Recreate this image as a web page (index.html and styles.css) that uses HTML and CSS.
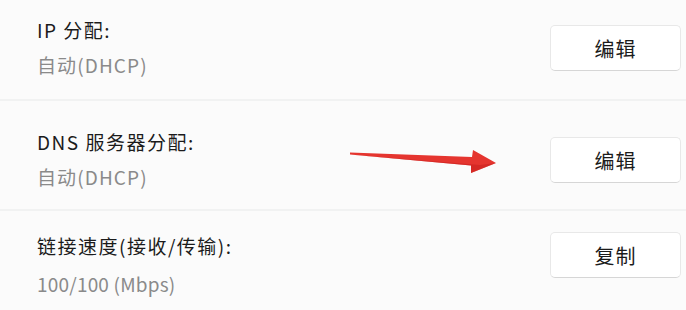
FILE: index.html
```html
<!DOCTYPE html>
<html lang="zh-CN">
<head>
    <meta charset="UTF-8">
    <meta name="viewport" content="width=device-width, initial-scale=1.0">
    <title>网络属性</title>
    <link rel="stylesheet" href="styles.css">
</head>
<body>
    <div class="panel">
        <div class="row row-ip">
            <div class="info">
                <div class="label">IP 分配:</div>
                <div class="value">自动(DHCP)</div>
            </div>
            <button class="btn">编辑</button>
        </div>

        <div class="row row-dns">
            <div class="info">
                <div class="label">DNS 服务器分配:</div>
                <div class="value">自动(DHCP)</div>
            </div>
            <button class="btn">编辑</button>
        </div>

        <div class="row row-speed">
            <div class="info">
                <div class="label">链接速度(接收/传输):</div>
                <div class="value value-speed">100/100 (Mbps)</div>
            </div>
            <button class="btn">复制</button>
        </div>

        <!-- annotation arrow -->
        <svg class="arrow" width="686" height="310" viewBox="0 0 686 310">
            <polygon points="350,152.5 472,157 473,150 496,163 471,173 471,165.5 350,154.5" fill="#e5352f"/>
            <polygon points="350,154.5 471,165.5 471,173 496,163 480,165" fill="#c9221f" opacity="0.6"/>
        </svg>
    </div>
</body>
</html>
```

FILE: styles.css
```css
* {
    margin: 0;
    padding: 0;
    box-sizing: border-box;
    font-family: 'Noto Sans CJK SC', 'Noto Sans', sans-serif;
}

body {
    background-color: #fbfbfb;
    width: 686px;
    height: 310px;
    overflow: hidden;
}

.panel {
    position: relative;
    height: 310px;
}

.row {
    display: flex;
    justify-content: space-between;
    align-items: flex-start;
    padding: 0 5px 0 37px;
}

.row + .row {
    border-top: 2px solid #f1f2f2;
}

.row-ip {
    height: 99px;
    padding-top: 19px;
}

.row-dns {
    height: 110px;
    padding-top: 30px;
}

.row-speed {
    height: 101px;
    padding-top: 24px;
}

.label {
    font-size: 19px;
    line-height: 22px;
    color: #1b1b1b;
    letter-spacing: 1.5px;
}

.value {
    font-size: 19px;
    line-height: 22px;
    color: #8a8a8a;
    margin-top: 13px;
    letter-spacing: 1.1px;
}

.row-speed .value {
    margin-top: 16px;
}

.value-speed {
    letter-spacing: 0.2px;
}

.btn {
    width: 131px;
    height: 46px;
    margin-top: 6px;
    background-color: #ffffff;
    border: 1px solid #e8e8e8;
    border-bottom-color: #d6d6d6;
    border-radius: 5px;
    font-size: 20px;
    letter-spacing: 1px;
    color: #1b1b1b;
    cursor: pointer;
}

.row-speed .btn {
    margin-top: -3px;
}

.arrow {
    position: absolute;
    left: 0;
    top: 0;
    pointer-events: none;
}
```
